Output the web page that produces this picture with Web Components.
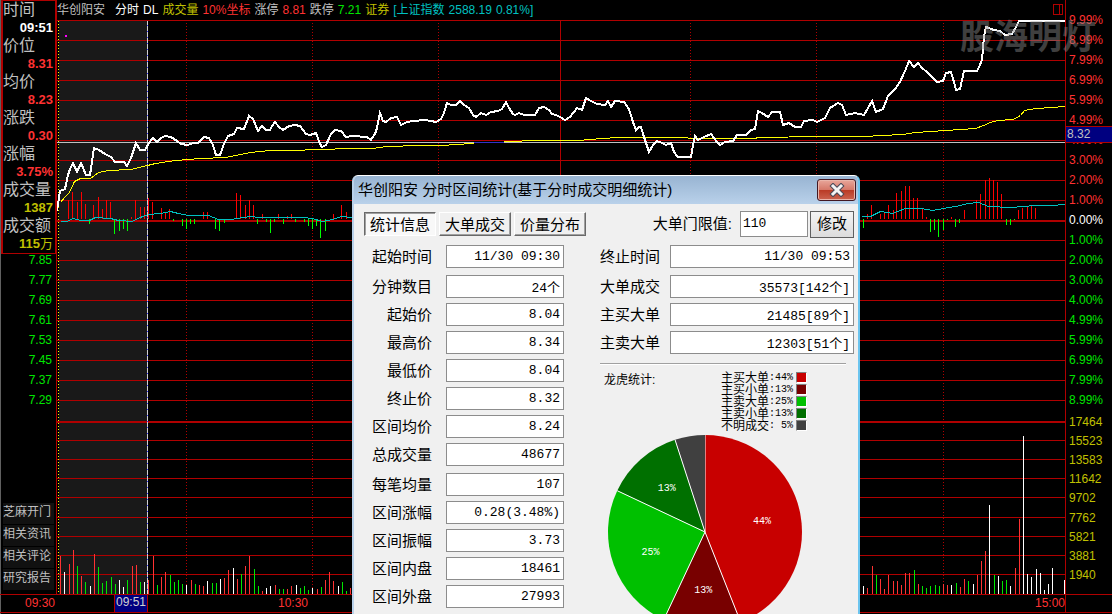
<!DOCTYPE html>
<html lang="zh-CN">
<head>
<meta charset="utf-8">
<title>华创阳安 分时</title>
<style>
  body { margin: 0; background: #000; color: #c0c0c0; font: 12px/16px "Liberation Sans", "Noto Sans CJK SC", sans-serif; }
</style>
</head>
<body>
<stock-app></stock-app>
<script>
const define = (name, html, setup) => {
  const template = document.createElement('template');
  template.innerHTML = html;
  customElements.define(name, class extends HTMLElement {
    constructor() {
      super();
      this.attachShadow({ mode: 'open' }).append(template.content.cloneNode(true));
    }
    connectedCallback() { if (setup) setup(this, this.shadowRoot); }
  });
};

/* Cursor readout: name and value on alternating lines */
define('cursor-readout', `
<style>
  :host { display: block; border: 1px solid #b00000; border-left-width: 2px; height: 254px; box-sizing: border-box; overflow: hidden; margin-left: 1px; }
  dl { margin: 0; }
  dt, dd { margin: 0; height: 18px; line-height: 18px; }
  dt { font-size: 16px; }
  dd { font-size: 13px; font-weight: bold; text-align: right; padding-right: 2px; color: #ff3232; }
  .w { color: #fff; } .y { color: #c0c000; }
  .n { font-weight: normal; font-size: 13px; } .n b { font-weight: bold; }
</style>
<dl>
  <dt>时间</dt><dd class="w">09:51</dd>
  <dt>价位</dt><dd>8.31</dd>
  <dt>均价</dt><dd>8.23</dd>
  <dt>涨跌</dt><dd>0.30</dd>
  <dt>涨幅</dt><dd>3.75%</dd>
  <dt>成交量</dt><dd class="y">1387</dd>
  <dt>成交额</dt><dd class="y n"><b>115</b>万</dd>
</dl>`);

define('scale-list', `
<style>
  :host { display: grid; grid-auto-rows: 20px; line-height: 20px; }
</style>`, (el, root) => {
  for (const item of el.getAttribute('values').split(' ')) {
    const d = document.createElement('div');
    d.textContent = item;
    if (el.hasAttribute('split')) {
      const i = root.querySelectorAll('div').length;
      d.style.color = i < 10 ? '#ff3232' : i === 10 ? '#fff' : '#00e600';
    }
    root.append(d);
  }
});

define('side-links', `
<style>
  :host { display: grid; gap: 1px; padding: 0 2px 4px 3px; }
  a { display: block; height: 21px; line-height: 18px; background: #111; color: #c0c0c0; text-decoration: none; white-space: nowrap; }
</style>
<a href="#open">芝麻开门</a><a href="#news">相关资讯</a><a href="#comment">相关评论</a><a href="#report">研究报告</a>`);

define('quote-bar', `
<style>
  :host { display: flex; justify-content: space-between; height: 20px; align-items: center; white-space: nowrap; }
  p { display: flex; gap: 4px; margin: 0; }
  .name { margin-right: 6px; } .w { color: #fff; } .y { color: #c0c000; } .r { color: #ff3232; } .g { color: #00e600; } .c { color: #00c0c0; }
  svg { margin: 0 2px 2px 0; display: block; }
</style>
<p><span class="name">华创阳安</span><span class="w">分时</span><span class="w">DL</span><span class="y">成交量</span><span class="r">10%坐标</span><span>涨停</span><span class="r">8.81</span><span>跌停</span><span class="g">7.21</span><span class="y">证券</span><span class="c">[上证指数</span><span class="c">2588.19</span><span class="c">0.81%]</span></p>
<svg width="10" height="12" shape-rendering="crispEdges" fill="none" stroke="#b00000"><path d="M.5 1.5H9.5V11.5H.5ZM6.5 1V11"/></svg>`);

/* Intraday chart: price, average, lead indicator and volume */
define('intraday-chart', `
<style>
  :host { display: block; }
  svg { display: block; width: 100%; height: 574px; }
  path, polyline { fill: none; vector-effect: non-scaling-stroke; }
</style>
<svg viewBox="57 20 1008 574" preserveAspectRatio="none" shape-rendering="crispEdges" role="img" aria-label="分时走势"></svg>`, (el, root) => {
  const svg = root.querySelector('svg');
  const add = (tag, attrs) => {
    const n = document.createElementNS('http://www.w3.org/2000/svg', tag);
    for (const k in attrs) n.setAttribute(k, attrs[k]);
    /* thin curves run through pixel centres */
    if (tag === 'polyline' && !attrs['stroke-width']) n.setAttribute('transform', 'translate(.5 .5)');
    svg.append(n);
  };
  add('rect', { x: 59, y: 20, width: 88, height: 574, fill: '#191919' });
  const rows = [];
  for (let y = 20; y <= 400; y += 20) if (y !== 220) rows.push(y);
  rows.push(440, 459, 478, 497, 517, 536, 555, 574);
  add('path', { d: rows.map(y => `M57 ${y}.5H1065`).join(''), stroke: '#b00000' });
  add('path', { d: 'M57 221H1065M57 422H1065', stroke: '#b00000', 'stroke-width': 2 });
  add('path', { d: [186, 312, 438, 690, 816, 943].map(x => `M${x}.5 23V594`).join(''), stroke: '#b00000', 'stroke-dasharray': '1 2' });
  add('path', { d: 'M560.5 20V594', stroke: '#b00000' });
  add('path', { d: 'M58.5 21V594', stroke: '#ffff00', 'stroke-dasharray': '1 2' });

  const bars = {
    '#ff0000': [219, '68:200 72:192 77:202 81:192 85:204 93:205 98:197 102:209 106:200 110:202 131:217 135:200 140:207 144:207 148:198 152:202 161:208 165:213 169:209 203:212 207:212 236:193 240:195 245:205 249:200 253:205 262:214 278:214 287:216 291:214 333:214 341:205 346:212 867:214 871:205 880:214 884:212 888:205 893:210 896:193 901:191 905:186 909:186 913:198 917:198 922:208 926:217 951:217 964:210 976:200 980:194 985:180 989:178 993:180 997:182 1001:194 1018:210 1022:208 1027:206 1031:206 1035:208'],
    '#00ff00': [219, '89:224 114:234 119:231 123:229 127:231 173:221 182:226 186:229 190:224 194:224 215:229 219:231 224:223 257:224 266:222 270:233 274:222 283:224 295:222 304:222 308:226 312:229 316:226 320:238 325:231 863:228 930:232 934:230 938:237 943:230 947:220 955:227 959:223 1006:225 1010:225 1014:220'],
    '#ff3232': [594, '60:556 69:564 73:550 81:576 94:554 132:566 136:565 148:580 153:556 161:577 165:572 191:580 199:585 203:586 224:578 228:570 237:579 245:566 249:556 262:591 275:585 287:589 291:586 317:589 325:580 329:572 333:581 350:588 867:588 872:566 880:579 884:589 888:575 893:581 897:581 901:585 905:573 909:573 918:584 943:584 947:585 960:587 964:579 977:575 981:561 985:551 1015:568 1019:519'],
    '#00e600': [594, '77:566 85:582 98:567 102:583 106:581 111:577 115:584 127:580 140:582 157:585 170:575 174:582 178:580 182:584 195:584 212:583 216:583 241:574 254:569 258:586 279:589 283:589 300:588 304:586 308:590 321:587 342:582 346:591 876:575 914:570 922:586 926:588 930:586 935:585 939:586 956:583 968:581 994:575 1002:581 1006:580'],
    '#ffffff': [594, '64:572 90:586 119:580 123:587 144:582 186:585 207:581 220:579 233:568 266:588 270:586 296:585 312:588 338:586 863:586 951:585 973:584 989:505 998:576 1010:586 1023:436 1027:574 1031:577 1036:569 1040:573 1044:590 1048:584 1052:568 1064:580']
  };
  for (const color in bars) {
    const [base, list] = bars[color];
    add('path', { d: list.split(' ').map(p => { const [x, y] = p.split(':'); return `M${x}.5 ${base}V${y}`; }).join(''), stroke: color });
  }
  const cyan = '60,221 66,221 73,218 80,220 89,220 95,217 110,218 118,220 132,221 137,218 148,214 160,213 170,211 178,213 188,215 208,215 218,219 230,219 250,216 258,217 302,217 312,218 322,221 332,219 341,216 352,217';
  const cyan2 = '861,216 870,216 880,211 892,213 905,208 920,208 932,210 943,208 955,206 968,203 978,202 988,206 1010,207 1035,205 1050,205 1065,204';
  add('polyline', { points: cyan, stroke: '#00c0c0' });
  add('polyline', { points: cyan2, stroke: '#00c0c0' });
  add('path', { d: 'M57 142.5H1065', stroke: '#c0c0c0' });
  add('path', { d: 'M474 142.5H504', stroke: '#3232c8' });
  add('path', { d: 'M147.5 20V594', stroke: '#3232ff' });
  add('path', { d: 'M147.5 20V594', stroke: '#d0d0d0', 'stroke-dasharray': '5 1' });
  add('polyline', { stroke: '#ffff00', points: '60,202 65,196 69,192 74,181 80,178 90,178 98,172 108,170 130,169 147,165 155,163 175,160 200,158 225,157 250,152 270,150 290,150 320,149 350,148 372,148 386,146 420,145 445,145 453,144 474,143' });
  add('polyline', { stroke: '#ffff00', points: '504,141 540,140 580,140 588,139 617,137 685,137 690,138 755,138 757,137 820,136 865,136 880,135 903,134 915,132 945,130 975,128 983,125 990,122 997,120 1013,119 1020,115 1024,110 1036,108 1065,106' });
  add('polyline', { stroke: '#ffffff', 'stroke-width': 2, points: '57,211 58,204 60,191 65,189 68,175 70,169 73,163 77,172 81,163 86,175 90,175 93,155 94,148 99,150 105,154 111,157 115,162 124,162 127,166 131,158 136,143 140,150 145,150 149,143 153,138 157,142 161,138 165,136 171,137 177,141 181,144 188,145 193,143 198,143 204,137 209,138 213,145 216,155 220,155 224,144 228,136 234,134 237,128 244,129 249,116 253,119 258,131 262,126 266,130 270,130 272,126 275,122 279,127 283,130 289,126 295,125 300,126 306,134 310,135 316,133 320,144 322,147 326,145 331,134 335,130 341,131 346,137 352,136 367,137 371,140 376,132 380,113 383,121 386,122 391,118 397,117 401,125 407,122 413,121 425,120 431,121 436,122 441,119 444,113 447,103 451,105 456,105 460,101 464,105 469,108 473,115 476,117 481,113 486,115 491,112 498,111 502,109 506,102 509,108 513,114 515,115 519,113 524,115 535,115 539,108 544,107 549,110 552,114 556,115 560,117 565,120 570,117 577,108 582,110 586,98 591,101 597,104 605,105 608,101 611,107 615,101 624,102 629,109 633,122 636,130 639,127 641,127 644,137 649,152 653,145 657,141 662,143 666,145 671,143 674,152 678,157 691,157 693,145 695,136 698,140 704,137 711,134 714,138 717,142 720,145 725,142 733,141 737,135 746,135 751,130 755,129 758,111 762,113 768,117 772,112 780,112 783,125 789,123 795,127 801,127 804,121 813,120 817,122 825,118 830,108 838,103 842,105 846,115 855,113 864,115 868,108 872,101 876,112 883,109 888,96 895,89 900,82 905,71 909,61 914,67 918,63 922,68 927,72 932,77 937,82 943,81 946,73 951,72 954,82 956,90 960,89 964,71 977,71 979,67 982,60 984,36 986,27 994,30 1000,31 1005,35 1012,34 1016,27 1019,21 1065,21' });
  add('path', { d: 'M57 20.5H1016', stroke: '#b00000' });
  add('path', { d: 'M65 36H67', stroke: '#ff00ff', 'stroke-width': 2 });
});

define('time-axis', `
<style>
  :host { display: grid; grid-template-columns: 57fr 34fr 126fr 34fr 757fr; height: 18px; line-height: 17px; color: #ff3232; text-align: right; }
  mark { background: #000080; color: #d0d0d0; border-left: 1px solid #b00000; border-right: 1px solid #b00000; line-height: 15px; text-align: center; }
</style>
<span></span><mark>09:51</mark><span></span><span>10:30</span><span>15:00</span>`);

define('value-axis', `
<style>
  :host { display: block; position: relative; border-left: 1px solid #b00000; padding: 10px 0 0 3px; box-sizing: border-box; }
  .vol { display: grid; grid-template-rows: repeat(9, 1fr); height: 173px; padding-top: 2px; color: #c0c000; align-items: center; }
  output { position: absolute; left: 0; right: 0; top: 126px; height: 15px; line-height: 15px; background: #000080; color: #c0c0c0; border: 1px solid #b00000; border-width: 1px 0; padding-left: 1px; }
</style>
<scale-list split values="9.99% 8.99% 7.99% 6.99% 5.99% 4.99% 4.00% 3.00% 2.00% 1.00% 0.00% 1.00% 2.00% 3.00% 4.00% 4.99% 5.99% 6.99% 7.99% 8.99%"></scale-list>
<div class="vol"><span>17464</span><span>15523</span><span>13583</span><span>11642</span><span>9702</span><span>7762</span><span>5821</span><span>3881</span><span>1940</span></div>
<output>8.32</output>`);

/* Labelled read-only value */
define('stat-field', `
<style>
  :host { display: grid; grid-template-columns: var(--label, 68px) 1fr; align-items: center; column-gap: var(--gap, 14px); height: 23px; }
  label { font-size: 15px; line-height: 22px; text-align: right; white-space: nowrap; }
  input { width: 100%; min-width: 0; height: 23px; box-sizing: border-box; border: 1px solid #8c8c8c; border-radius: 0; background: #fff; color: #000; padding: 0 3px; text-align: right; font: 13px "Liberation Mono", "Noto Sans CJK SC", monospace; outline: none; }
</style>
<label for="v"></label><input id="v" readonly>`, (el, root) => {
  root.querySelector('label').textContent = el.getAttribute('label');
  root.querySelector('input').value = el.getAttribute('value');
});

define('order-pie', `
<style>
  :host { display: block; }
  svg { display: block; margin: 0 auto; }
  text { fill: #fff; font: 10px "Liberation Mono", monospace; text-anchor: middle; }
</style>
<svg width="196" height="196" viewBox="0 0 196 196" role="img" aria-label="龙虎统计"></svg>`, (el, root) => {
  const svg = root.querySelector('svg');
  const at = (p, r) => [98 + r * Math.sin(p * Math.PI / 50), 98 - r * Math.cos(p * Math.PI / 50)];
  let out = '', from = 0;
  for (const [share, color, shown] of [[44, '#c80000', 1], [13, '#780000', 1], [25, '#00c000', 1], [13, '#007000', 1], [5, '#404040', 0]]) {
    const a = at(from, 97), b = at(from + share, 97), m = at(from + share / 2, 58);
    out += `<path d="M98 98L${a}A97 97 0 0 1 ${b}Z" fill="${color}" stroke="none"/><path d="M98 98L${a}" stroke="#fff"/>`;
    if (shown) out += `<text x="${m[0]}" y="${m[1] + 3}">${share}%</text>`;
    from += share;
  }
  svg.innerHTML = out;
});

define('stats-dialog', `
<style>
  :host { display: block; box-sizing: border-box; width: 508px; height: 460px; background: #f0f0f0; color: #000; border: 2px solid #b9d1ea; border-top: 1px solid #fff; border-right-color: #6cc4ee; border-radius: 6px 6px 0 0; overflow: hidden; }
  header { display: flex; justify-content: space-between; height: 28px; background: linear-gradient(#98b4d2, #b9d1ea); padding: 0 2px 0 4px; }
  h2 { margin: 0; font-size: 15px; font-weight: normal; line-height: 28px; white-space: nowrap; }
  .close { width: 39px; height: 22px; margin-top: 3px; padding: 0; border: 1px solid #431822; border-radius: 3px; background: linear-gradient(#e8a79b, #d6796a 48%, #b93a24 50%, #cc6450); box-shadow: inset 0 0 0 1px #eab5aa; display: grid; place-items: center; }
  .bar { display: flex; align-items: center; height: 30px; margin: 5px 4px 0 10px; }
  nav { display: flex; gap: 3px; flex: 1; }
  button { font: 15px/20px "Noto Sans CJK SC", sans-serif; color: #000; white-space: nowrap; }
  nav button { width: 72px; height: 24px; padding: 0; background: #f0f0f0; border: 1px solid; border-color: #fff #696969 #696969 #fff; box-shadow: inset -1px -1px #a0a0a0; }
  nav button[aria-pressed=true] { background: #f8f8f8; border-color: #696969 #fff #fff #696969; box-shadow: inset 1px 1px #a0a0a0; }
  .bar label { font-size: 15px; margin-right: 8px; }
  .bar input { width: 68px; height: 26px; box-sizing: border-box; border: 1px solid #8c8c8c; padding: 0 2px 2px; font: 13px "Liberation Mono", monospace; margin-right: 2px; }
  .ok { width: 44px; height: 27px; padding: 0 0 2px; border: 1px solid #606060; background: linear-gradient(#f4f4f4, #dcdcdc); }
  main { display: grid; grid-template-columns: 200px 254px; column-gap: 36px; padding: 6px 4px 0 10px; }
  section { display: grid; gap: 5px; align-content: start; }
  .up { margin-top: 2px; }
  .right { --label: 60px; --gap: 10px; }
  .right .lead { margin-top: 2px; }
  hr { width: 246px; margin: 4px 0 0; border: 0; border-top: 1px solid #a0a0a0; border-bottom: 1px solid #fff; }
  .legend { display: grid; grid-template-columns: 1fr 88px; padding: 0 47px 0 4px; margin-top: 2px; font-size: 12px; line-height: 12px; }
  h3 { font-size: 12px; font-weight: normal; margin: 2px 0 0; }
  ul { list-style: none; margin: 0; padding: 0; }
  li { display: flex; justify-content: flex-end; height: 12px; white-space: nowrap; }
  li b { font: 10px/12px "Liberation Mono", monospace; }
  li i { width: 9px; height: 9px; border: 1px solid; border-color: #808080 #fff #fff #808080; margin-left: 3px; background: var(--c); flex: none; }
  order-pie { margin: -3px 0 0 -45px; }
</style>
<header><h2>华创阳安 分时区间统计(基于分时成交明细统计)</h2>
<button class="close" aria-label="关闭"><svg width="16" height="14" viewBox="0 0 16 14"><path d="M4 3L12 11M12 3L4 11" stroke="#4a4a58" stroke-width="5" stroke-linecap="square"/><path d="M4 3L12 11M12 3L4 11" stroke="#f4f4f4" stroke-width="3" stroke-linecap="square"/></svg></button></header>
<div class="bar"><nav><button aria-pressed="true">统计信息</button><button>大单成交</button><button>价量分布</button></nav>
<label for="limit">大单门限值:</label><input id="limit" value="110"><button class="ok">修改</button></div>
<main>
  <section>
    <stat-field label="起始时间" value="11/30 09:30"></stat-field>
    <stat-field class="up" label="分钟数目" value="24个"></stat-field>
    <stat-field label="起始价" value="8.04"></stat-field>
    <stat-field label="最高价" value="8.34"></stat-field>
    <stat-field label="最低价" value="8.04"></stat-field>
    <stat-field label="终止价" value="8.32"></stat-field>
    <stat-field label="区间均价" value="8.24"></stat-field>
    <stat-field label="总成交量" value="48677"></stat-field>
    <stat-field class="up" label="每笔均量" value="107"></stat-field>
    <stat-field label="区间涨幅" value="0.28(3.48%)"></stat-field>
    <stat-field label="区间振幅" value="3.73"></stat-field>
    <stat-field label="区间内盘" value="18461"></stat-field>
    <stat-field label="区间外盘" value="27993"></stat-field>
  </section>
  <section class="right">
    <stat-field label="终止时间" value="11/30 09:53"></stat-field>
    <stat-field class="lead" label="大单成交" value="35573[142个]"></stat-field>
    <stat-field label="主买大单" value="21485[89个]"></stat-field>
    <stat-field label="主卖大单" value="12303[51个]"></stat-field>
    <hr>
    <div class="legend"><h3>龙虎统计:</h3><ul>
      <li style="--c:#c80000">主买大单<b>:44%</b><i></i></li>
      <li style="--c:#780000">主买小单<b>:13%</b><i></i></li>
      <li style="--c:#00c000">主卖大单<b>:25%</b><i></i></li>
      <li style="--c:#007000">主卖小单<b>:13%</b><i></i></li>
      <li style="--c:#404040">不明成交<b>:&nbsp;5%</b><i></i></li>
    </ul></div>
    <order-pie></order-pie>
  </section>
</main>`);

define('stock-app', `
<style>
  :host { display: grid; position: relative; grid-template-columns: 57px 1fr 47px; grid-template-rows: auto auto 1fr; min-height: 100vh; overflow: hidden; box-shadow: inset 1px 0 #606060; }
  aside { display: flex; flex-direction: column; border-right: 1px solid #b00000; }
  .prices { color: #00e600; text-align: right; padding-right: 4px; margin-top: -4px; }
  side-links { margin-top: auto; }
  .foot { border-top: 1px solid #b00000; height: 17px; line-height: 16px; text-align: right; color: #ff3232; }
  .start { padding-right: 2px; }
  .corner { border-left: 1px solid #b00000; }
  .tabs { grid-column: 1 / -1; border-top: 1px solid #b00000; height: 1px; }
  .mark { position: absolute; right: 16px; top: 13px; font: bold 34px/44px "Noto Sans CJK SC", sans-serif; color: #8c8c8c; opacity: .45; }
  stats-dialog { position: absolute; left: 352px; top: 175px; }
</style>
<aside><cursor-readout></cursor-readout><scale-list class="prices" values="7.85 7.77 7.69 7.61 7.53 7.45 7.37 7.29"></scale-list><side-links></side-links></aside>
<div><quote-bar></quote-bar><intraday-chart></intraday-chart></div>
<value-axis></value-axis>
<div class="foot start">09:30</div><time-axis class="foot"></time-axis><div class="foot corner"></div>
<div class="tabs"></div>
<div class="mark">股海明灯</div>
<stats-dialog></stats-dialog>`);
</script>
</body>
</html>
